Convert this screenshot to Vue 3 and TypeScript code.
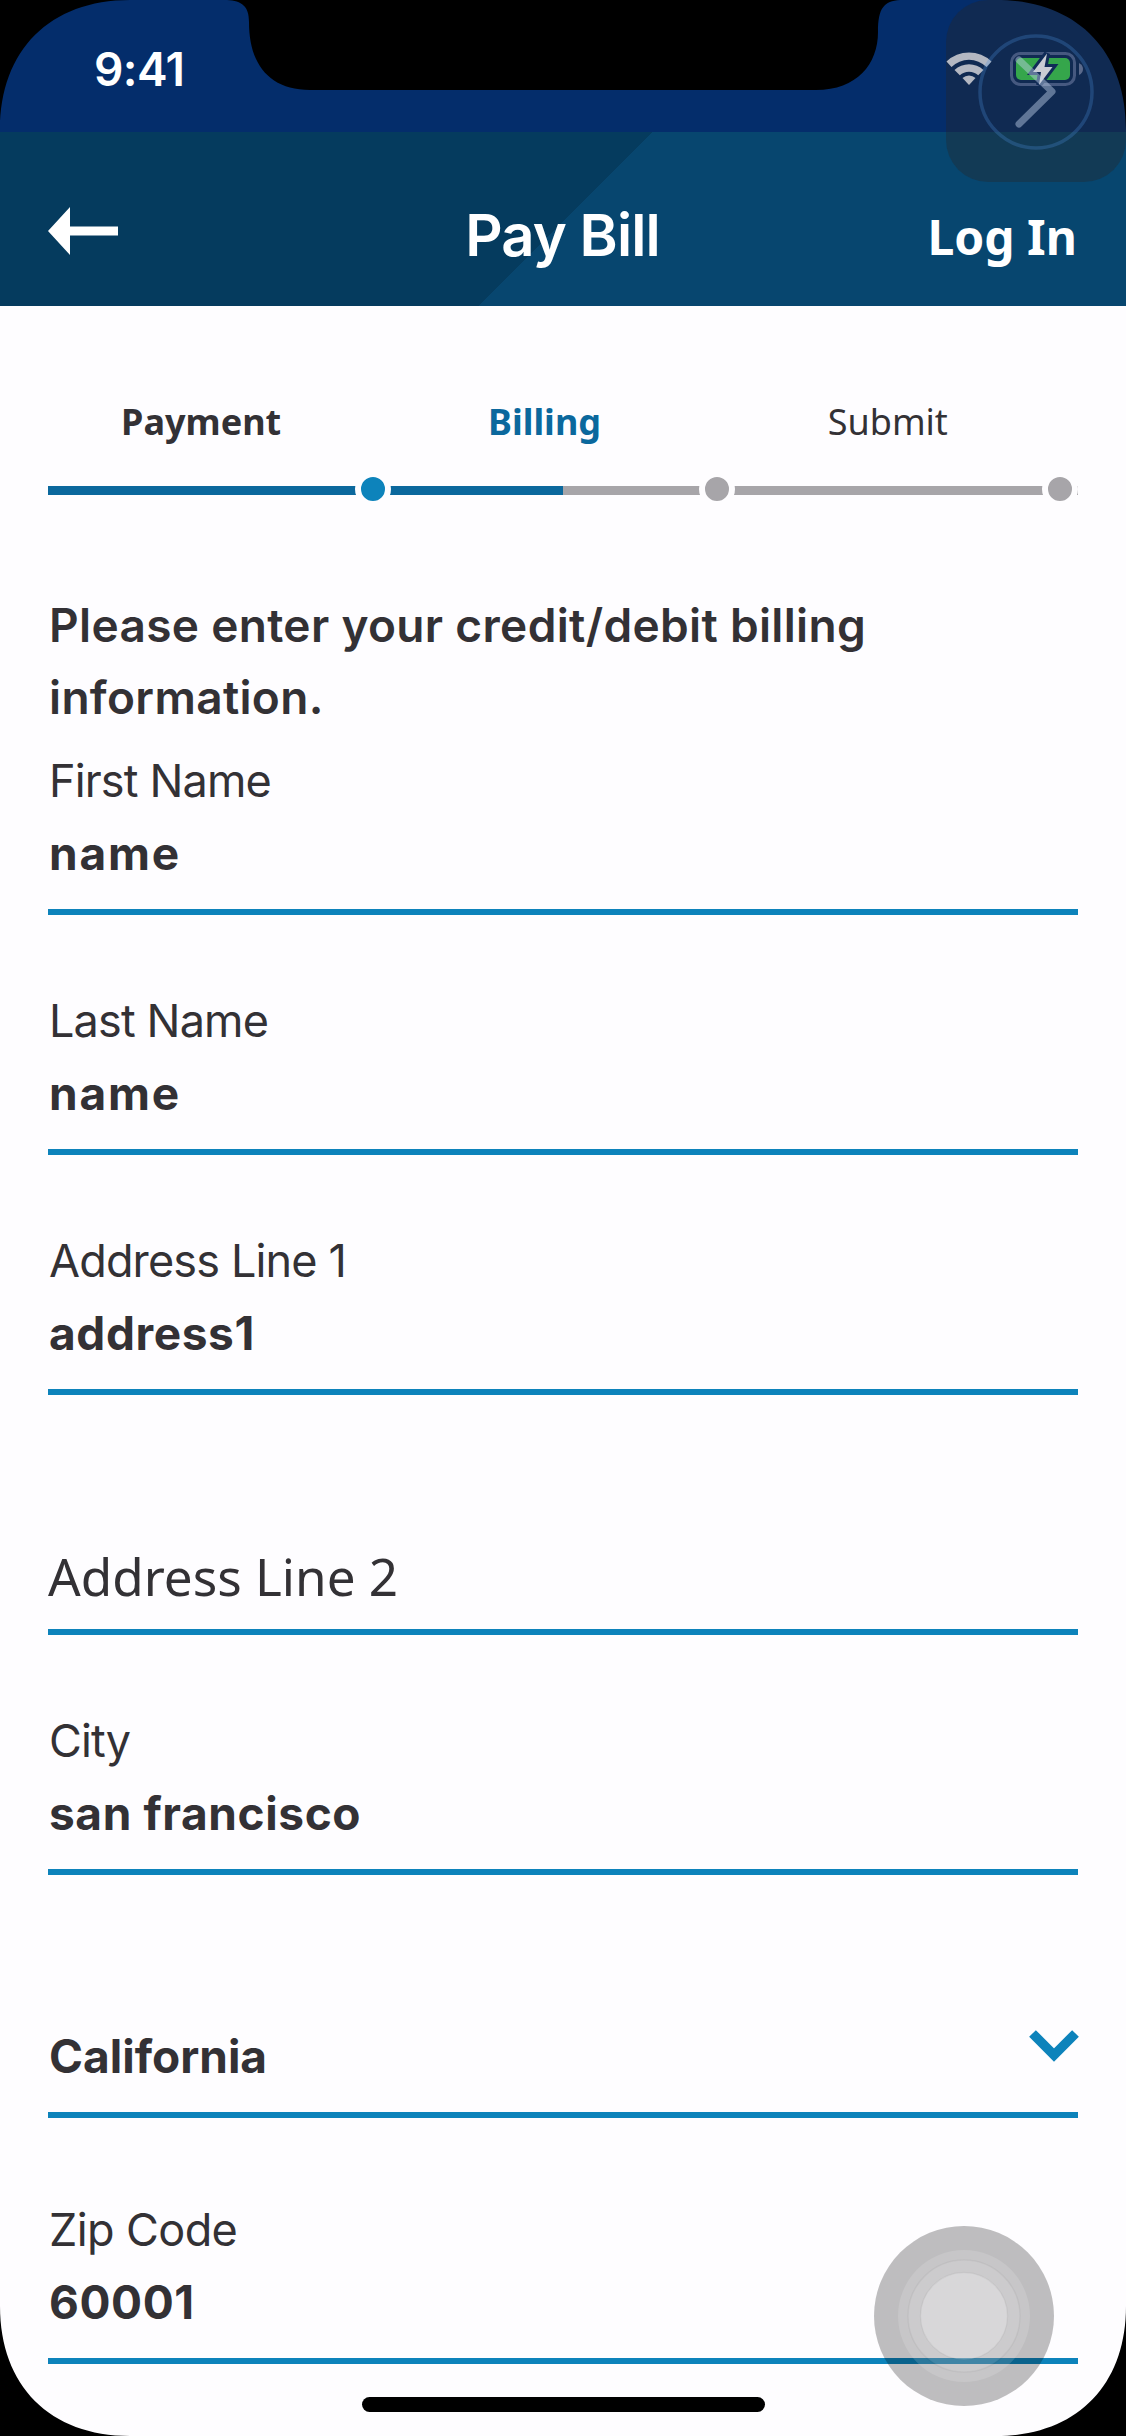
<script setup lang="ts">
interface Step {
  label: string
  state: 'done' | 'active' | 'todo'
}

interface Field {
  id: string
  label?: string
  value?: string
  placeholder?: string
  select?: boolean
}

const steps: Step[] = [
  { label: 'Payment', state: 'done' },
  { label: 'Billing', state: 'active' },
  { label: 'Submit', state: 'todo' },
]

const fields: Field[] = [
  { id: 'first', label: 'First Name', value: 'name' },
  { id: 'last', label: 'Last Name', value: 'name' },
  { id: 'address1', label: 'Address Line 1', value: 'address1' },
  { id: 'address2', placeholder: 'Address Line 2' },
  { id: 'city', label: 'City', value: 'san francisco' },
  { id: 'state', value: 'California', select: true },
  { id: 'zip', label: 'Zip Code', value: '60001' },
]
</script>

<template>
  <div class="screen">
    <div class="status">
      <span class="time">9:41</span>
      <svg class="status-icons" width="140" height="34" viewBox="946 52 140 34">
        <g fill="#b4b8c2">
          <path d="M946.5 61.5A32.5 32.5 0 0 1 991.500 61.5L986.500 67A25 25 0 0 0 951.500 67Z" />
          <path d="M954.500 70A21 21 0 0 1 983.500 70L978.200 75.300A13.500 13.500 0 0 0 959.800 75.300Z" />
          <path d="M962.500 78A9.500 9.500 0 0 1 975.500 78L969 85Z" />
        </g>
        <rect x="1011.500" y="53.500" width="63" height="31" rx="9" fill="none" stroke="#465980" stroke-width="3" />
        <rect x="1016" y="58" width="54" height="22" rx="5" fill="#35a64b" />
        <path d="M1079 63Q1083 65 1083 69Q1083 73 1079 75Z" fill="#5b6a8b" />
        <path d="M1047 53.500L1033 72H1041L1039 85L1052.500 67H1044.500Z" fill="#c9ccd4" stroke="#102b57" stroke-width="6" paint-order="stroke" />
      </svg>
    </div>

    <header class="header">
      <svg class="back" width="70" height="48" viewBox="0 0 70 48">
        <path d="M0 24L22 0V19.500H70V28.500H22V48Z" fill="#fff" />
      </svg>
      <h1 class="title">Pay Bill</h1>
      <span class="login">Log In</span>
    </header>

    <main class="content">
      <div class="steps">
        <div v-for="step in steps" :key="step.label" class="step" :class="step.state">
          <span class="step-label">{{ step.label }}</span>
          <div class="track"><i class="dot"></i></div>
        </div>
      </div>

      <h2 class="intro">Please enter your credit/debit billing information.</h2>

      <div class="form">
        <div v-for="field in fields" :key="field.id" class="field" :class="field.id">
          <span v-if="field.label" class="label">{{ field.label }}</span>
          <span v-if="field.placeholder" class="placeholder">{{ field.placeholder }}</span>
          <div v-else class="row">
            <span class="value">{{ field.value }}</span>
            <svg v-if="field.select" class="caret" width="50" height="32" viewBox="0 0 50 32">
              <path d="M3.500 3.500L25 25L46.500 3.500" fill="none" stroke="#0d83bb" stroke-width="9.500" />
            </svg>
          </div>
        </div>
      </div>
    </main>

    <div class="home"></div>

    <svg class="touch" width="180" height="180" viewBox="0 0 180 180">
      <circle cx="90" cy="90" r="90" fill="#000" fill-opacity=".25" />
      <circle cx="90" cy="90" r="66" fill="#fff" fill-opacity=".14" />
      <circle cx="90" cy="90" r="56" fill="#fff" fill-opacity=".1" stroke="#000" stroke-opacity=".04" stroke-width="1.500" />
      <circle cx="90" cy="90" r="43.500" fill="#fff" fill-opacity=".24" stroke="#000" stroke-opacity=".04" stroke-width="1.500" />
    </svg>

    <div class="assist">
      <svg width="180" height="182" viewBox="0 0 180 182">
        <circle cx="90" cy="92" r="56" fill="none" stroke="#4a90dc" stroke-opacity=".28" stroke-width="3.500" />
        <path d="M73 60L106 91.500L73 124" fill="none" stroke="#c3d2ec" stroke-opacity=".45" stroke-width="7" stroke-linecap="round" stroke-linejoin="round" />
      </svg>
    </div>

    <svg class="bezel" width="1126" height="2436" viewBox="0 0 1126 2436">
      <path d="M0 0H130C50 0 0 50 0 130Z" />
      <path d="M1126 0H996C1076 0 1126 50 1126 130Z" />
      <path d="M0 2436H130C50 2436 0 2386 0 2306Z" />
      <path d="M1126 2436H996C1076 2436 1126 2386 1126 2306Z" />
      <path d="M227 0C242 1 249 6 249 22C249 64 269 90 310 90H816C857 90 878 64 878 32C878 8 884 1 900 0Z" />
    </svg>
  </div>
</template>

<style>
body {
  background: #000;
}
</style>

<style scoped>
.screen {
  position: relative;
  display: flex;
  flex-direction: column;
  width: 1126px;
  height: 2436px;
  overflow: hidden;
  background: #fefdff;
  color: #333135;
  font-family: Inter, "Liberation Sans", sans-serif;
}

.status {
  display: flex;
  justify-content: space-between;
  align-items: flex-start;
  box-sizing: border-box;
  height: 132px;
  padding: 41px 40px 0 94px;
  background: #042d6b;
}

.time {
  color: #fff;
  font-size: 46px;
  font-weight: 600;
  line-height: 56px;
  letter-spacing: -0.6px;
}

.status-icons {
  position: relative;
  z-index: 2;
  margin-top: 11px;
  overflow: visible;
}

.header {
  display: grid;
  grid-template-columns: 1fr auto 1fr;
  align-items: center;
  box-sizing: border-box;
  height: 174px;
  padding: 24px 49px 0 48px;
  background:
    linear-gradient(135deg, #053b5e 0 50.1%, #07466f 50.2%) 478px 0 / 174px 174px no-repeat,
    linear-gradient(90deg, #053b5e 0 565px, #07466f 565px);
  color: #fff;
}

.title {
  margin: 8px 0 0;
  font-size: 58px;
  font-weight: 600;
  line-height: 70px;
  letter-spacing: -0.9px;
}

.login {
  justify-self: end;
  margin-top: 12px;
  font-family: "Noto Sans", sans-serif;
  font-size: 48px;
  font-weight: 700;
  line-height: 64px;
}

.content {
  padding: 0 48px;
}

.steps {
  display: flex;
  padding-top: 91px;
}

.step {
  flex: 1;
}

.step-label {
  display: block;
  margin-left: -37px;
  color: #333135;
  font-family: "Noto Sans", sans-serif;
  font-size: 36px;
  line-height: 50px;
  text-align: center;
}

.done .step-label {
  font-weight: 700;
}

.active .step-label {
  color: #0b689d;
  font-weight: 700;
}

.track {
  display: flex;
  justify-content: flex-end;
  align-items: center;
  height: 9px;
  margin-top: 39px;
  background: #a7a5a9;
}

.done .track {
  background: #0b689d;
}

.active .track {
  background: linear-gradient(90deg, #0b689d 50%, #a7a5a9 50%);
}

.dot {
  flex: none;
  width: 24px;
  height: 24px;
  margin-top: -3px;
  border: 6px solid #fefdff;
  border-radius: 50%;
  background: #a7a5a9;
}

.done .dot {
  background: #0d83bb;
}

.intro {
  margin: 94px 0 0 1px;
  font-size: 46px;
  font-weight: 600;
  line-height: 72px;
  letter-spacing: 0.34px;
}

.form {
  padding-top: 20px;
}

.field {
  display: flex;
  flex-direction: column;
  justify-content: flex-end;
  gap: 9px;
  box-sizing: border-box;
  height: 162px;
  padding-bottom: 20px;
  border-bottom: 6px solid #0d83bb;
}

.field + .field {
  margin-top: 78px;
}

.label {
  padding-left: 1px;
  font-size: 45px;
  font-weight: 400;
  line-height: 54px;
  letter-spacing: -0.85px;
}

.zip .label {
  letter-spacing: -0.6px;
}

.row {
  display: flex;
  justify-content: space-between;
  align-items: center;
  height: 72px;
}

.value {
  padding-left: 1px;
  font-size: 46px;
  font-weight: 700;
  line-height: 72px;
  letter-spacing: 0.6px;
}

.first .value,
.last .value {
  letter-spacing: 1.8px;
}

.state .value {
  letter-spacing: 0;
}

.caret {
  margin-right: -1px;
  margin-top: -20px;
}

.placeholder {
  font-family: "Noto Sans", sans-serif;
  font-size: 51.2px;
  line-height: 72px;
}

.field.address2 {
  padding-bottom: 17px;
}

.field.state {
  margin-top: 81px;
}

.field.zip {
  margin-top: 84px;
}

.home {
  width: 403px;
  height: 15px;
  margin: 33px auto 0;
  border-radius: 8px;
  background: #000;
}

.touch {
  position: absolute;
  left: 874px;
  top: 2226px;
}

.assist {
  position: absolute;
  top: 0;
  right: 0;
  width: 180px;
  height: 182px;
  border-radius: 42px;
  background: rgba(40, 38, 38, 0.35);
}

.assist svg {
  display: block;
  position: relative;
  z-index: 3;
}

.bezel {
  position: absolute;
  inset: 0;
  z-index: 4;
}
</style>
